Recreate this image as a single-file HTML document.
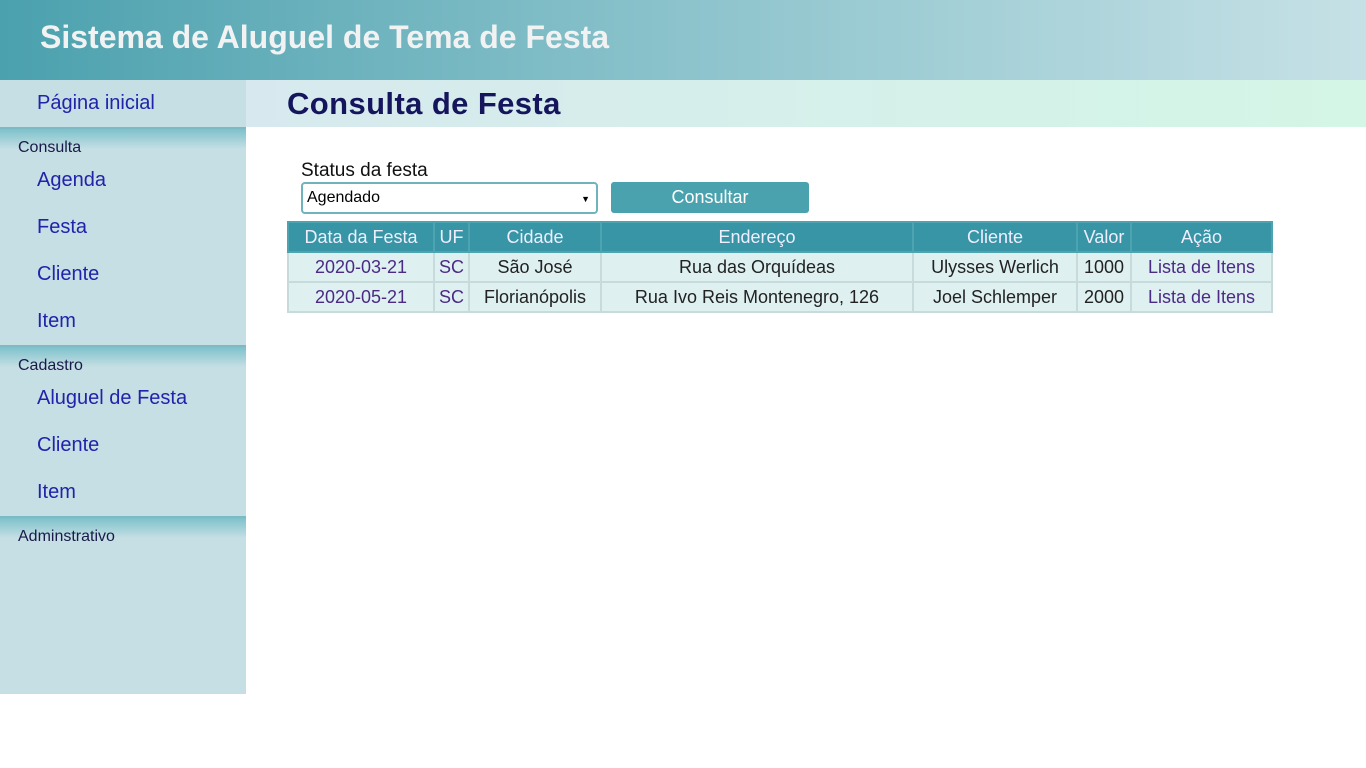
<!DOCTYPE html>
<html><head><meta charset="utf-8"><style>
*{margin:0;padding:0;box-sizing:border-box}
body{width:1366px;height:768px;background:#fff;font-family:"Liberation Sans",Arial,sans-serif;position:relative;overflow:hidden}
.hdr{position:absolute;left:0;top:0;width:1366px;height:80px;background:linear-gradient(90deg,#4ba1ae 0%,#8cc3cc 50%,#c6e1e6 100%)}
.hdr h1{position:absolute;left:40px;top:19px;font-size:32px;font-weight:bold;color:#f2f2f2}
.side{position:absolute;left:0;top:80px;width:246px;height:614px;background:#c5dfe4}
.it{position:absolute;left:37px;font-size:20px;color:#2222aa}
.sec{position:absolute;left:0;width:246px;height:22px;background:linear-gradient(#7ec1cb,#c5dfe4)}
.sl{position:absolute;left:18px;font-size:16px;color:#1a1a4a}
.tb{position:absolute;left:246px;top:80px;width:1120px;height:47px;background:linear-gradient(90deg,#d7e9ee,#d4f6e6)}
.tb h2{position:absolute;left:41px;top:6px;font-size:31px;color:#15155e;letter-spacing:0.4px}
.lbl{position:absolute;left:301px;top:160px;font-size:19px;color:#111}
.sel{position:absolute;left:301px;top:182px;width:297px;height:32px;border:2px solid #6fb3bd;border-radius:4px;background:#fff;font-size:16px;padding:5px 4px}
.sel span{position:absolute;right:6px;top:10px;font-size:9px}
.btn{position:absolute;left:611px;top:182px;width:198px;height:31px;background:#4aa2ae;border-radius:3px;color:#fff;font-size:18px;text-align:center;line-height:30px}
table{position:absolute;left:287px;top:221px;border-collapse:collapse;font-size:18px}
td,th{border:2px solid #c7dbdc;text-align:center;height:30px;padding:0;font-weight:normal}
th{background:#3795a5;color:#eef;border-color:#4da3b0}
td{background:#dff0f1;color:#222}
.l{color:#4b2a86}
</style></head><body>
<div class="hdr"><h1>Sistema de Aluguel de Tema de Festa</h1></div>
<div class="side">
<div class="it" style="top:12px">Página inicial</div>
<div class="sec" style="top:47px;border-top:2px solid #7dbac4"></div><div class="sl" style="top:59px">Consulta</div>
<div class="it" style="top:89px">Agenda</div>
<div class="it" style="top:136px">Festa</div>
<div class="it" style="top:183px">Cliente</div>
<div class="it" style="top:230px">Item</div>
<div class="sec" style="top:265px;border-top:2px solid #7dbac4"></div><div class="sl" style="top:277px">Cadastro</div>
<div class="it" style="top:307px">Aluguel de Festa</div>
<div class="it" style="top:354px">Cliente</div>
<div class="it" style="top:401px">Item</div>
<div class="sec" style="top:436px;border-top:2px solid #7dbac4"></div><div class="sl" style="top:448px">Adminstrativo</div>
</div>
<div class="tb"><h2>Consulta de Festa</h2></div>
<div class="lbl">Status da festa</div>
<div class="sel">Agendado<span>▼</span></div>
<div class="btn">Consultar</div>
<table>
<tr><th style="width:146px">Data da Festa</th><th style="width:35px">UF</th><th style="width:132px">Cidade</th><th style="width:312px">Endereço</th><th style="width:164px">Cliente</th><th style="width:54px">Valor</th><th style="width:141px">Ação</th></tr>
<tr><td class="l">2020-03-21</td><td class="l">SC</td><td>São José</td><td>Rua das Orquídeas</td><td>Ulysses Werlich</td><td>1000</td><td class="l">Lista de Itens</td></tr>
<tr><td class="l">2020-05-21</td><td class="l">SC</td><td>Florianópolis</td><td>Rua Ivo Reis Montenegro, 126</td><td>Joel Schlemper</td><td>2000</td><td class="l">Lista de Itens</td></tr>
</table>
</body></html>
